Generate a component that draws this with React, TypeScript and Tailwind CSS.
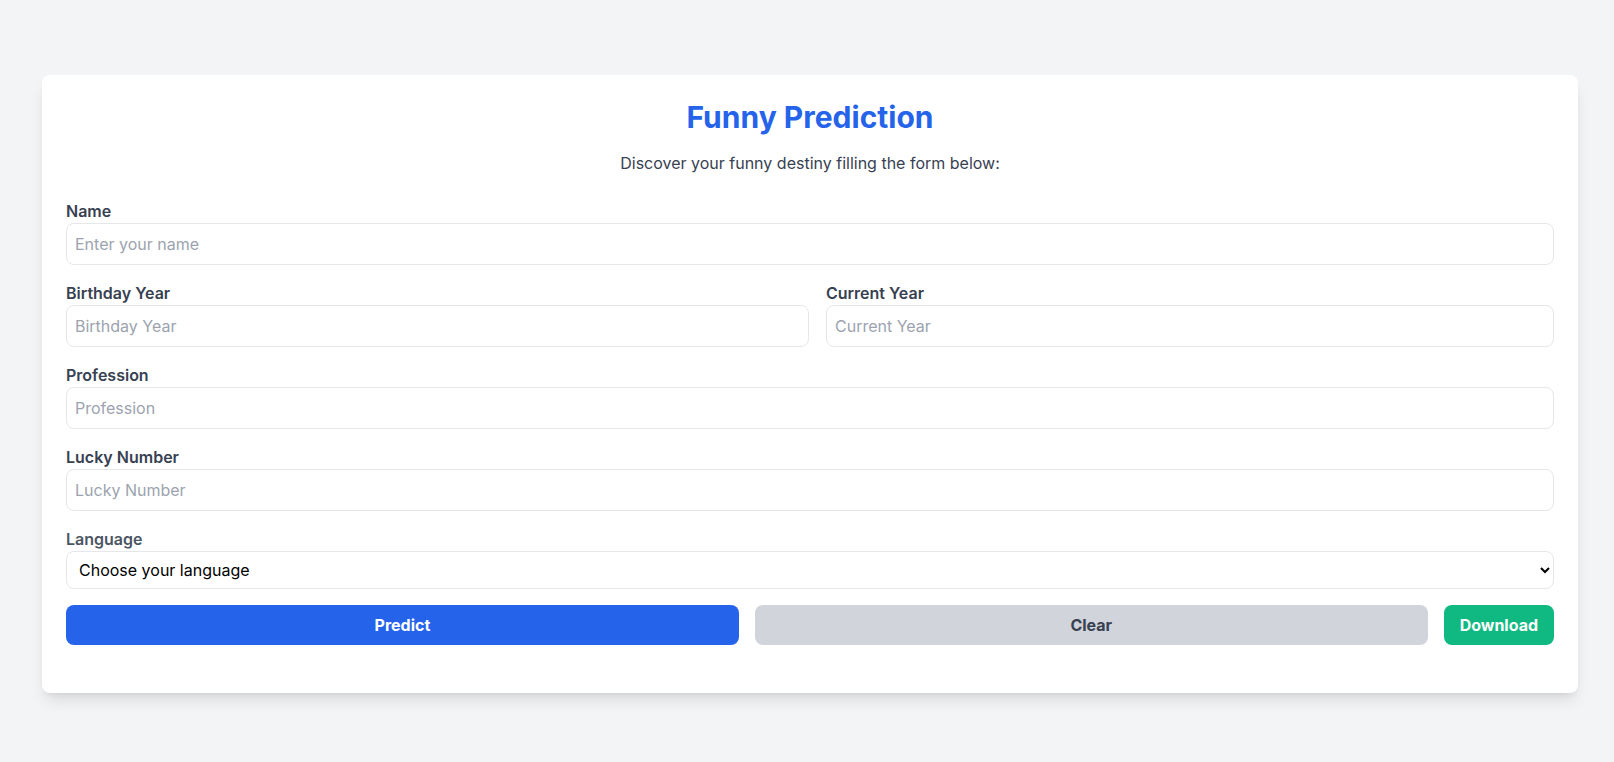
import React from "react";

export default function App() {
  const inputCls =
    "w-full h-[42px] px-2 py-2 text-base leading-6 border border-[#e5e7eb] rounded-lg bg-white text-gray-900 placeholder:text-[#9ca3af] outline-none";
  const labelCls = "block text-base leading-6 font-semibold text-[#374151]";
  return (
    <div
      className="min-h-[762px] w-full bg-[#f3f4f6] pt-[75px] pl-[42px] pr-[36px]"
      style={{ fontFamily: "Inter, 'Noto Sans', sans-serif" }}
    >
      <div className="bg-white rounded-lg shadow-lg p-6 pb-12">
        <h1 className="text-3xl leading-9 font-bold text-[#2563eb] text-center mb-4">
          Funny Prediction
        </h1>
        <p className="text-base leading-6 text-[#374151] text-center mb-6">
          Discover your funny destiny filling the form below:
        </p>
        <div className="flex flex-col gap-4">
          <div>
            <label className={labelCls}>Name</label>
            <input className={inputCls} placeholder="Enter your name" />
          </div>
          <div className="grid grid-cols-[743px_1fr] gap-[17px]">
            <div>
              <label className={labelCls}>Birthday Year</label>
              <input className={inputCls} placeholder="Birthday Year" />
            </div>
            <div>
              <label className={labelCls}>Current Year</label>
              <input className={inputCls} placeholder="Current Year" />
            </div>
          </div>
          <div>
            <label className={labelCls}>Profession</label>
            <input className={inputCls} placeholder="Profession" />
          </div>
          <div>
            <label className={labelCls}>Lucky Number</label>
            <input className={inputCls} placeholder="Lucky Number" />
          </div>
          <div>
            <label className="block text-base leading-6 font-semibold text-[#4b5563]">
              Language
            </label>
            <select
              className="w-full h-[38px] px-2 text-base border border-[#e5e7eb] rounded-lg bg-white text-black outline-none"
              defaultValue=""
            >
              <option value="">Choose your language</option>
              <option value="en">English</option>
              <option value="es">Español</option>
            </select>
          </div>
          <div className="flex gap-4">
            <button className="flex-1 h-10 rounded-lg bg-[#2563eb] text-white font-bold text-base">
              Predict
            </button>
            <button className="flex-1 h-10 rounded-lg bg-[#d1d5db] text-[#374151] font-bold text-base">
              Clear
            </button>
            <button className="h-10 px-4 rounded-lg bg-[#10b981] text-white font-bold text-base">
              Download
            </button>
          </div>
        </div>
      </div>
    </div>
  );
}
